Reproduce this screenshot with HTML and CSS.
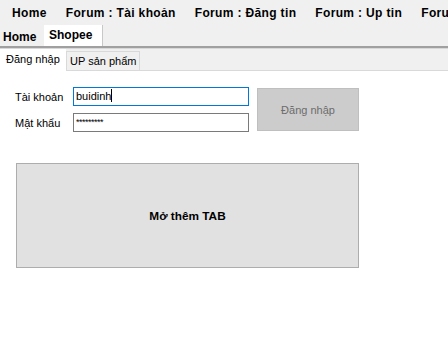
FILE: index.html
```html
<!DOCTYPE html>
<html lang="vi">
<head>
    <meta charset="UTF-8">
    <title>Shopee Tool</title>
    <link rel="stylesheet" href="styles.css">
</head>
<body>
    <div class="menubar">
        <span class="menu-item">Home</span>
        <span class="menu-item">Forum : Tài khoản</span>
        <span class="menu-item">Forum : Đăng tin</span>
        <span class="menu-item">Forum : Up tin</span>
        <span class="menu-item">Forum</span>
    </div>

    <div class="tabs-main">
        <span class="tab-main">Home</span>
        <span class="tab-main active">Shopee</span>
    </div>

    <div class="tabs-sub">
        <span class="tab-sub active">Đăng nhập</span>
        <span class="tab-sub">UP sản phẩm</span>
    </div>

    <div class="page">
        <div class="login">
            <div class="fields">
                <div class="field">
                    <label>Tài khoản</label>
                    <div class="input focus">buidinh<span class="caret"></span></div>
                </div>
                <div class="field">
                    <label>Mật khẩu</label>
                    <div class="input pass">*********</div>
                </div>
            </div>
            <button class="btn-login">Đăng nhập</button>
        </div>

        <button class="btn-tab">Mở thêm TAB</button>
    </div>
</body>
</html>
```

FILE: styles.css
```css
body {
    margin: 0;
    background: #fff;
    font-family: "Liberation Sans", Arial, sans-serif;
    font-size: 11px;
    color: #000;
    width: 448px;
    height: 361px;
    overflow: hidden;
}
.menubar {
    display: flex;
    height: 25px;
    align-items: center;
    padding-left: 12px;
    background: #f0f0f0;
    white-space: nowrap;
    overflow: hidden;
}
.menu-item {
    font-weight: bold;
    font-size: 12px;
    letter-spacing: 0.35px;
    margin-right: 19px;
}
.tabs-main {
    display: flex;
    align-items: flex-end;
    height: 21px;
    background: #f0f0f0;
    border-bottom: 2px solid #a0a0a0;
    box-shadow: 0 1px 0 #d8d8d8;
    position: relative;
}
.tab-main {
    font-weight: bold;
    font-size: 12px;
    height: 18px;
    line-height: 18px;
    padding: 0 6px 0 3px;
    width: 35px;
}
.tab-main.active {
    background: #fff;
    height: 21px;
    width: 48px;
    padding: 0 5px;
    line-height: 20px;
    border-right: 1px solid #c8c8c8;
}
.tabs-sub {
    display: flex;
    align-items: flex-end;
    height: 21px;
    margin-top: 1px;
    background: #f0f0f0;
    border-bottom: 1px solid #d9d9d9;
}
.tab-sub {
    height: 18px;
    line-height: 18px;
    padding: 0 3px;
    border: 1px solid #d9d9d9;
    border-bottom: none;
}
.tab-sub.active {
    background: #fff;
    height: 22px;
    line-height: 20px;
    padding: 0 5px 0 6px;
    border: none;
    margin-bottom: -1px;
    width: 55px;
}
.page {
    padding: 16px 0 0 15px;
}
.login {
    display: flex;
    gap: 8px;
}
.fields {
    display: flex;
    flex-direction: column;
    gap: 7px;
}
.field {
    display: flex;
    align-items: center;
}
.field label {
    width: 58px;
}
.input {
    width: 172px;
    height: 17px;
    line-height: 17px;
    padding-left: 2px;
    border: 1px solid #7a7a7a;
}
.input.focus {
    border-color: #0078d7;
}
.input.pass {
    font-size: 9px;
    letter-spacing: -0.5px;
}
.caret {
    display: inline-block;
    width: 1px;
    height: 13px;
    background: #000;
    vertical-align: -2px;
}
.btn-login {
    margin-top: 1px;
    width: 102px;
    height: 43px;
    background: #cccccc;
    border: 1px solid #bfbfbf;
    color: #6d6d6d;
    font-family: inherit;
    font-size: 11px;
}
.btn-tab {
    display: block;
    margin-top: 31px;
    margin-left: 1px;
    width: 343px;
    height: 105px;
    background: #e1e1e1;
    border: 1px solid #adadad;
    font-family: inherit;
    font-size: 11.8px;
    font-weight: bold;
    color: #000;
}
```
